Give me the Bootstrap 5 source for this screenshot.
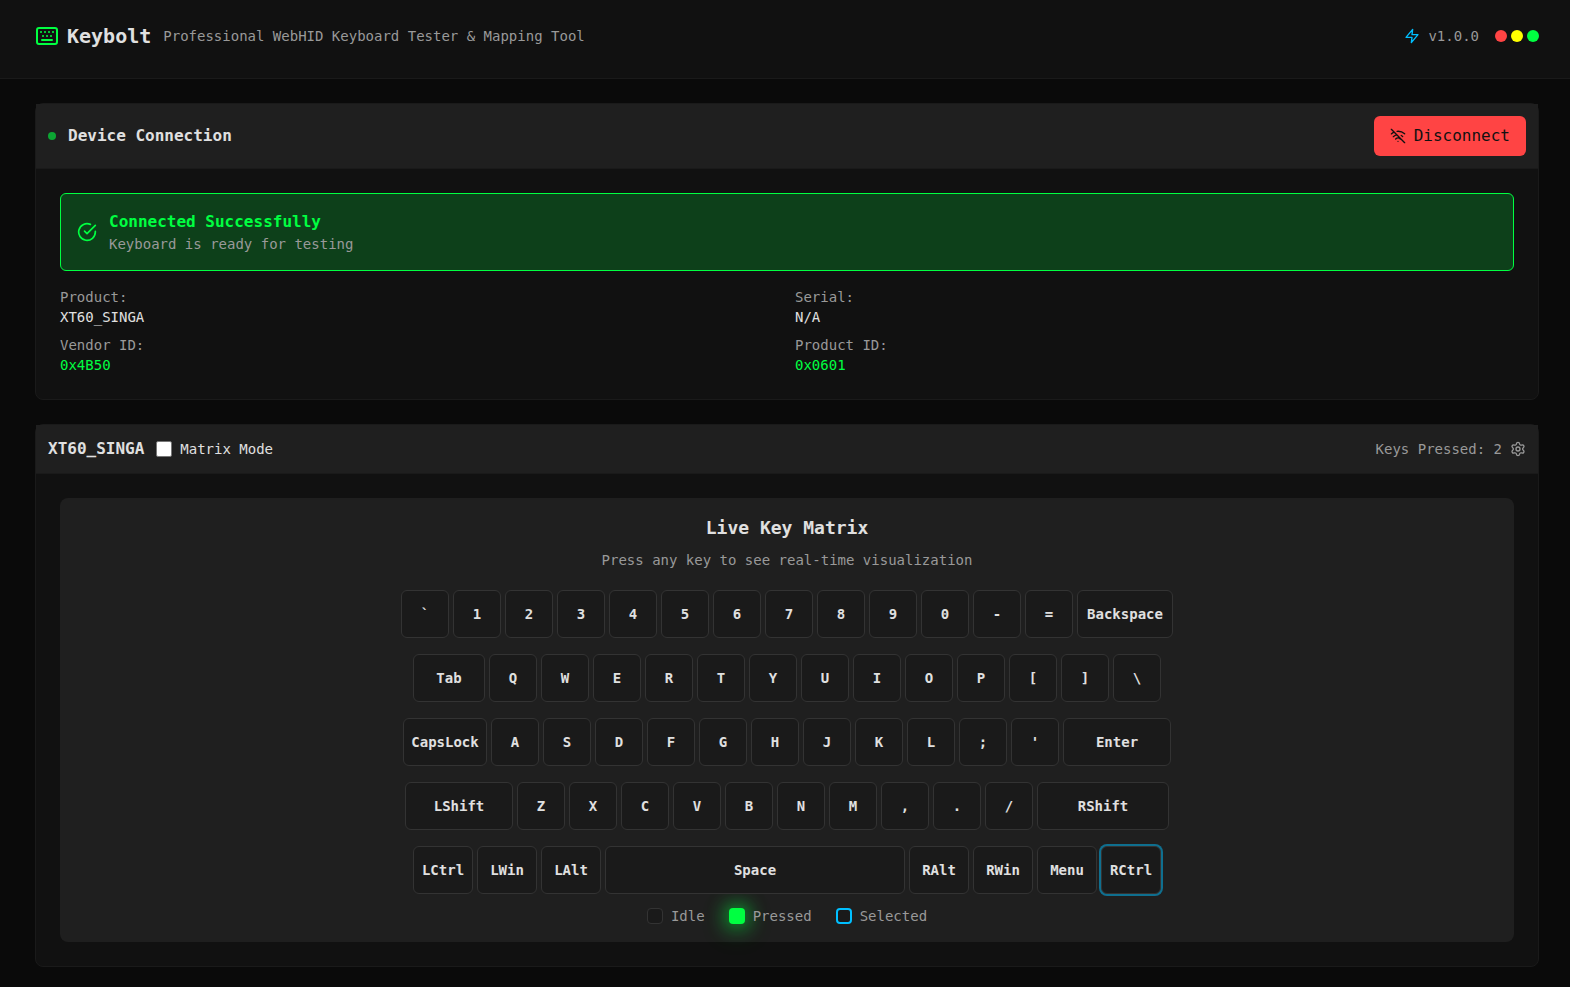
<!DOCTYPE html>
<html lang="en">
<head>
<meta charset="utf-8">
<meta name="viewport" content="width=device-width, initial-scale=1">
<title>Keybolt</title>
<link href="https://cdn.jsdelivr.net/npm/bootstrap@5.3.0/dist/css/bootstrap.min.css" rel="stylesheet">
<style>
  :root {
    --neon: #00ff41;
    --sky: #00bfff;
    --danger: #ff4444;
    --ink: #e0e0e0;
    --dim: #999999;
    --surface: #111111;
    --raised: #1f1f1f;
    --line: #1a1a1a;
    --mono: "DejaVu Sans Mono", "Liberation Mono", monospace;
  }
  body { background: #0a0a0a; color: var(--ink); font-family: var(--mono); font-size: 14px; line-height: 20px; }
  svg { display: block; flex: none; fill: none; stroke: currentColor; stroke-width: 2; stroke-linecap: round; stroke-linejoin: round; }
  .gutter { padding-left: 35px; padding-right: 31px; }
  .topbar { background: var(--surface); border-bottom: 1px solid var(--line); padding-top: 22px; padding-bottom: 28px; }
  .brand { font-size: 20px; line-height: 28px; font-weight: 700; }
  .dim { color: var(--dim); }
  .neon { color: var(--neon); }
  .sky { color: var(--sky); }
  .gap-12 { gap: 12px; }
  .light { width: 12px; height: 12px; border-radius: 50%; }
  .light-red { background: var(--danger); }
  .light-yellow { background: #ffff00; }
  .light-green { background: var(--neon); }
  .panel { background: var(--surface); border: 1px solid var(--line); border-radius: 8px; }
  .panel-head { background: var(--raised); border-bottom: 1px solid var(--line); padding: 12px; }
  .panel-title { font-size: 16px; line-height: 24px; font-weight: 700; margin: 0; }
  .status { width: 8px; height: 8px; border-radius: 50%; background: var(--neon); opacity: .6; }
  .btn-disconnect, .btn-disconnect:hover { background: var(--danger); color: #111111; border: 0; border-radius: 6px; padding: 8px 16px; font-size: 16px; line-height: 24px; }
  .notice { background: rgba(0, 255, 65, .2); border: 1px solid var(--neon); border-radius: 6px; padding: 16px; }
  .board { background: var(--raised); border-radius: 8px; }
  .board-title { font-size: 18px; line-height: 28px; font-weight: 700; }
  .tick { appearance: none; width: 16px; height: 16px; margin: 0; background: #fff; border: 1px solid #767676; border-radius: 2px; }
  .tick:checked { background: var(--neon); }
  .btn-gear { background: none; border: 0; padding: 0; color: inherit; }
  .keyboard { display: grid; gap: 16px; margin-top: 20px; margin-bottom: 12px; position: relative; z-index: 1; }
  .keycap { width: 48px; height: 48px; padding: 0; background: #1a1a1a; color: var(--ink); border: 1px solid #333333; border-radius: 6px; font-weight: 700; }
  .k-60 { width: 60px; }
  .k-72 { width: 72px; }
  .k-84 { width: 84px; }
  .k-96 { width: 96px; }
  .k-108 { width: 108px; }
  .k-132 { width: 132px; }
  .k-300 { width: 300px; }
  .keycap.is-selected { box-shadow: 0 0 0 2px rgba(0, 191, 255, .5); }
  .swatch { width: 16px; height: 16px; border-radius: 4px; background: #1a1a1a; border: 1px solid #333333; }
  .swatch-pressed { background: var(--neon); border: 0; box-shadow: 0 0 20px var(--neon), 0 4px 30px rgba(0, 255, 65, .3); }
  .swatch-selected { border: 2px solid var(--sky); }
</style>
</head>
<body>
<header class="topbar gutter d-flex flex-wrap align-items-center justify-content-between">
  <div class="d-flex flex-wrap align-items-center gap-12">
    <div class="d-flex align-items-center gap-2">
      <svg class="neon" width="24" height="24" viewBox="0 0 24 24" aria-hidden="true"><rect x="2" y="4" width="20" height="16" rx="2"/><path d="M6 8h.01M10 8h.01M14 8h.01M18 8h.01M8 12h.01M12 12h.01M16 12h.01M7 16h10"/></svg>
      <h1 class="brand mb-0">Keybolt</h1>
    </div>
    <span class="dim">Professional WebHID Keyboard Tester &amp; Mapping Tool</span>
  </div>
  <div class="d-flex align-items-center gap-3">
    <div class="d-flex align-items-center gap-2">
      <svg class="sky" width="16" height="16" viewBox="0 0 24 24" aria-hidden="true"><path d="M13 2 3 14h9l-1 8 10-12h-9l1-8z"/></svg>
      <span class="dim">v1.0.0</span>
    </div>
    <div class="d-flex gap-1">
      <span class="light light-red"></span>
      <span class="light light-yellow"></span>
      <span class="light light-green"></span>
    </div>
  </div>
</header>

<main class="gutter d-flex flex-column gap-4 pt-4 pb-3">
  <section class="panel">
    <div class="panel-head d-flex align-items-center justify-content-between">
      <div class="d-flex align-items-center gap-12">
        <span class="status"></span>
        <h2 class="panel-title">Device Connection</h2>
      </div>
      <button type="button" class="btn btn-disconnect d-flex align-items-center gap-2">
        <svg width="16" height="16" viewBox="0 0 24 24" aria-hidden="true"><path d="M2 2l20 20M8.5 16.5a5 5 0 0 1 7 0M2 8.82a15 15 0 0 1 4.17-2.65M10.66 5c4.01-.36 8.14.9 11.34 3.76M16.85 11.25a10 10 0 0 1 2.22 1.68M5 13a10 10 0 0 1 5.24-2.76M12 20h.01"/></svg>
        Disconnect
      </button>
    </div>
    <div class="p-4">
      <div class="notice d-flex align-items-center gap-12 mb-3" role="status">
        <svg class="neon" width="20" height="20" viewBox="0 0 24 24" aria-hidden="true"><path d="M22 11.08V12a10 10 0 1 1-5.93-9.14"/><path d="m9 11 3 3L22 4"/></svg>
        <div>
          <p class="panel-title neon">Connected Successfully</p>
          <p class="dim mb-0">Keyboard is ready for testing</p>
        </div>
      </div>
      <dl class="row row-cols-2 gx-3 gy-2 mb-0">
        <div><dt class="dim fw-normal">Product:</dt><dd class="mb-0">XT60_SINGA</dd></div>
        <div><dt class="dim fw-normal">Serial:</dt><dd class="mb-0">N/A</dd></div>
        <div><dt class="dim fw-normal">Vendor ID:</dt><dd class="neon mb-0">0x4B50</dd></div>
        <div><dt class="dim fw-normal">Product ID:</dt><dd class="neon mb-0">0x0601</dd></div>
      </dl>
    </div>
  </section>

  <section class="panel">
    <div class="panel-head d-flex flex-wrap align-items-center justify-content-between">
      <div class="d-flex align-items-center gap-12">
        <h2 class="panel-title">XT60_SINGA</h2>
        <div class="d-flex align-items-center gap-2">
          <input class="tick" type="checkbox" id="matrixMode">
          <label for="matrixMode">Matrix Mode</label>
        </div>
      </div>
      <div class="dim d-flex align-items-center gap-2">
        <span>Keys Pressed: 2</span>
        <button type="button" class="btn-gear" aria-label="Settings">
          <svg width="16" height="16" viewBox="0 0 24 24" aria-hidden="true"><path d="M9.671 4.136a2.34 2.34 0 0 1 4.659 0 2.34 2.34 0 0 0 3.319 1.915 2.34 2.34 0 0 1 2.33 4.033 2.34 2.34 0 0 0 0 3.831 2.34 2.34 0 0 1-2.33 4.033 2.34 2.34 0 0 0-3.319 1.915 2.34 2.34 0 0 1-4.659 0 2.34 2.34 0 0 0-3.32-1.915 2.34 2.34 0 0 1-2.33-4.033 2.34 2.34 0 0 0 0-3.831A2.34 2.34 0 0 1 6.35 6.051a2.34 2.34 0 0 0 3.319-1.915"/><circle cx="12" cy="12" r="3"/></svg>
        </button>
      </div>
    </div>
    <div class="p-4">
      <div class="board p-3">
        <div class="text-center">
          <h3 class="board-title mb-2">Live Key Matrix</h3>
          <p class="dim mb-0">Press any key to see real-time visualization</p>
        </div>
        <div class="keyboard">
          <div class="d-flex flex-wrap justify-content-center gap-1">
            <button type="button" class="keycap">`</button>
            <button type="button" class="keycap">1</button>
            <button type="button" class="keycap">2</button>
            <button type="button" class="keycap">3</button>
            <button type="button" class="keycap">4</button>
            <button type="button" class="keycap">5</button>
            <button type="button" class="keycap">6</button>
            <button type="button" class="keycap">7</button>
            <button type="button" class="keycap">8</button>
            <button type="button" class="keycap">9</button>
            <button type="button" class="keycap">0</button>
            <button type="button" class="keycap">-</button>
            <button type="button" class="keycap">=</button>
            <button type="button" class="keycap k-96">Backspace</button>
          </div>
          <div class="d-flex flex-wrap justify-content-center gap-1">
            <button type="button" class="keycap k-72">Tab</button>
            <button type="button" class="keycap">Q</button>
            <button type="button" class="keycap">W</button>
            <button type="button" class="keycap">E</button>
            <button type="button" class="keycap">R</button>
            <button type="button" class="keycap">T</button>
            <button type="button" class="keycap">Y</button>
            <button type="button" class="keycap">U</button>
            <button type="button" class="keycap">I</button>
            <button type="button" class="keycap">O</button>
            <button type="button" class="keycap">P</button>
            <button type="button" class="keycap">[</button>
            <button type="button" class="keycap">]</button>
            <button type="button" class="keycap">\</button>
          </div>
          <div class="d-flex flex-wrap justify-content-center gap-1">
            <button type="button" class="keycap k-84">CapsLock</button>
            <button type="button" class="keycap">A</button>
            <button type="button" class="keycap">S</button>
            <button type="button" class="keycap">D</button>
            <button type="button" class="keycap">F</button>
            <button type="button" class="keycap">G</button>
            <button type="button" class="keycap">H</button>
            <button type="button" class="keycap">J</button>
            <button type="button" class="keycap">K</button>
            <button type="button" class="keycap">L</button>
            <button type="button" class="keycap">;</button>
            <button type="button" class="keycap">'</button>
            <button type="button" class="keycap k-108">Enter</button>
          </div>
          <div class="d-flex flex-wrap justify-content-center gap-1">
            <button type="button" class="keycap k-108">LShift</button>
            <button type="button" class="keycap">Z</button>
            <button type="button" class="keycap">X</button>
            <button type="button" class="keycap">C</button>
            <button type="button" class="keycap">V</button>
            <button type="button" class="keycap">B</button>
            <button type="button" class="keycap">N</button>
            <button type="button" class="keycap">M</button>
            <button type="button" class="keycap">,</button>
            <button type="button" class="keycap">.</button>
            <button type="button" class="keycap">/</button>
            <button type="button" class="keycap k-132">RShift</button>
          </div>
          <div class="d-flex flex-wrap justify-content-center gap-1">
            <button type="button" class="keycap k-60">LCtrl</button>
            <button type="button" class="keycap k-60">LWin</button>
            <button type="button" class="keycap k-60">LAlt</button>
            <button type="button" class="keycap k-300">Space</button>
            <button type="button" class="keycap k-60">RAlt</button>
            <button type="button" class="keycap k-60">RWin</button>
            <button type="button" class="keycap k-60">Menu</button>
            <button type="button" class="keycap k-60 is-selected">RCtrl</button>
          </div>
        </div>
        <div class="dim d-flex flex-wrap justify-content-center gap-4">
          <div class="d-flex align-items-center gap-2"><span class="swatch"></span><span>Idle</span></div>
          <div class="d-flex align-items-center gap-2"><span class="swatch swatch-pressed"></span><span>Pressed</span></div>
          <div class="d-flex align-items-center gap-2"><span class="swatch swatch-selected"></span><span>Selected</span></div>
        </div>
      </div>
    </div>
  </section>
</main>
<script src="https://cdn.jsdelivr.net/npm/bootstrap@5.3.0/dist/js/bootstrap.bundle.min.js"></script>
</body>
</html>
